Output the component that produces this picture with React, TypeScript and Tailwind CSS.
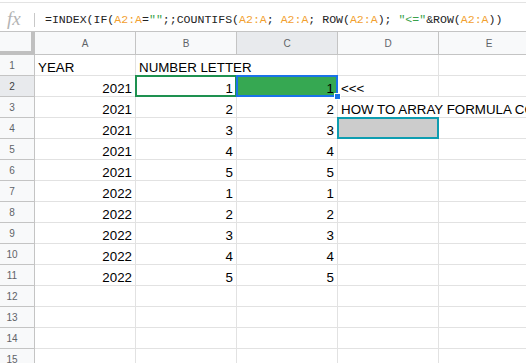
import React from "react";

type Cell = {
  t?: string;
  align?: "l" | "r";
  noRight?: boolean;
  fill?: string;
  sel?: "green" | "blue" | "teal";
};

const ORANGE = "text-[#f29f2f]";
const GREEN = "text-[#3aa14a]";

function Formula() {
  const ref = (s: string) => <span className={ORANGE}>{s}</span>;
  const str = (s: string) => <span className={GREEN}>{s}</span>;
  return (
    <span>
      =INDEX(IF({ref("A2:A")}={str('""')};;COUNTIFS({ref("A2:A")}; {ref("A2:A")}; ROW({ref("A2:A")}); {str('"<="')}&amp;ROW({ref("A2:A")}))
    </span>
  );
}

const rows: Cell[][] = [];
rows.push([
  { t: "YEAR", align: "l" },
  { t: "NUMBER LETTER", align: "l", noRight: true },
  {},
  {},
  {},
]);
for (let i = 0; i < 10; i++) {
  const year = i < 5 ? "2021" : "2022";
  const n = String((i % 5) + 1);
  const r: Cell[] = [
    { t: year, align: "r" },
    { t: n, align: "r" },
    { t: n, align: "r" },
    {},
    {},
  ];
  if (i === 0) {
    r[1].sel = "green";
    r[2].sel = "blue";
    r[2].fill = "bg-[#36a852]";
    r[3] = { t: "<<<", align: "l" };
  }
  if (i === 1) {
    r[3] = { t: "HOW TO ARRAY FORMULA COUNTIFS", align: "l", noRight: true };
    r[4] = { noRight: true };
  }
  if (i === 2) {
    r[3] = { fill: "bg-[#cccccc]", sel: "teal" };
  }
  rows.push(r);
}
for (let i = 0; i < 4; i++) rows.push([{}, {}, {}, {}, {}]);

const letters = ["A", "B", "C", "D", "E"];

export default function App() {
  return (
    <div
      className="w-[526px] h-[363px] overflow-hidden bg-white relative"
      style={{ fontFamily: '"Liberation Sans", Arial, sans-serif' }}
    >
      {/* formula bar */}
      <div className="pt-[2px]">
        <div className="h-[29px] border-t border-[#e3e3e3] flex items-start">
          <div
            className="w-[34px] pl-[7px] pt-[6px] text-[19px] leading-[20px] italic text-[#b4b4b4]"
            style={{ fontFamily: '"Liberation Serif", "Times New Roman", serif' }}
          >
            fx
          </div>
          <div className="w-px h-[14px] mt-[10px] bg-[#c8c8c8]" />
          <div
            className="pl-[10px] pt-[10px] text-[11.55px] leading-[14px] text-[#222] whitespace-nowrap"
            style={{ fontFamily: '"Liberation Mono", "DejaVu Sans Mono", monospace' }}
          >
            <Formula />
          </div>
        </div>
      </div>

      {/* column headers */}
      <div className="flex h-[24px] border-t border-b border-[#c4c4c4] bg-[#f8f9fa]">
        <div className="w-[35px] shrink-0 h-[22px] relative">
          <div className="absolute right-0 top-0 w-[4px] h-[23px] bg-[#c0c0c0]" />
          <div className="absolute left-0 bottom-[-1px] w-[35px] h-[4px] bg-[#c0c0c0]" />
        </div>
        {letters.map((l) => (
          <div
            key={l}
            className={`w-[101px] shrink-0 border-r border-[#c4c4c4] flex items-center justify-center text-[10px] text-[#5f6368] ${
              l === "C" ? "bg-[#e8eaed]" : ""
            }`}
          >
            {l}
          </div>
        ))}
      </div>

      {/* rows */}
      {rows.map((r, ri) => (
        <div key={ri} className="flex h-[21px]">
          <div
            className={`w-[35px] shrink-0 border-r border-b border-[#c4c4c4] flex items-center justify-center pr-[10px] text-[10px] ${
              ri === 1 ? "bg-[#e8eaed] text-[#3c4043]" : "bg-[#f8f9fa] text-[#5f6368]"
            }`}
          >
            {ri + 1}
          </div>
          {r.map((c, ci) => (
            <div
              key={ci}
              className={`relative w-[101px] shrink-0 border-b border-[#e2e2e2] ${
                c.noRight ? "border-r border-r-transparent" : "border-r"
              } flex items-end ${c.align === "r" ? "justify-end" : "justify-start"} px-[3px] text-[13.33px] leading-[15px] text-black whitespace-nowrap ${
                c.fill ?? ""
              }`}
            >
              {c.t && <span className="relative z-10">{c.t}</span>}
              {c.sel === "green" && (
                <div className="absolute left-[-1px] top-[-1px] w-[102px] h-[22px] border-2 border-[#1e9150] z-20" />
              )}
              {c.sel === "blue" && (
                <>
                  <div className="absolute left-[-1px] top-[-1px] w-[102px] h-[22px] border-2 border-[#1a73e8] z-20" />
                  <div className="absolute right-[-4px] bottom-[-4px] w-[7px] h-[7px] bg-[#1a73e8] border border-white z-30" />
                </>
              )}
              {c.sel === "teal" && (
                <div className="absolute left-[-1px] top-[-1px] w-[102px] h-[22px] border-2 border-[#0e9db0] z-20" />
              )}
            </div>
          ))}
        </div>
      ))}
    </div>
  );
}
